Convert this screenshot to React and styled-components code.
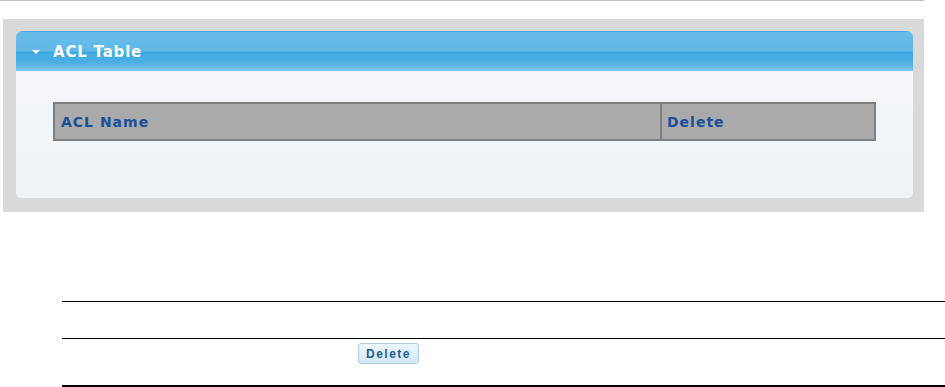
import React from 'react'
import styled, { createGlobalStyle } from 'styled-components'

const Global = createGlobalStyle`
  body {
    margin: 0;
    background: #fff;
    font-family: "Liberation Sans", Arial, sans-serif;
  }
`

const Page = styled.div`
  width: 945px;
  height: 387px;
  overflow: hidden;
`

const TopRule = styled.div`
  width: 924px;
  height: 1px;
  background: #bdbdbd;
`

const Frame = styled.div`
  margin: 18px 0 0 3px;
  width: 921px;
  height: 193px;
  box-sizing: border-box;
  padding: 12px 11px 14px 13px;
  background: #d9d9d9;
`

const Panel = styled.div`
  height: 100%;
  display: flex;
  flex-direction: column;
  border-radius: 6px 6px 5px 5px;
  overflow: hidden;
  background: linear-gradient(#f8f9fb, #eef3f7);
`

const PanelHead = styled.div`
  height: 40px;
  flex: none;
  box-sizing: border-box;
  display: flex;
  align-items: center;
  gap: 13px;
  padding-left: 16px;
  border-top: 1px solid #4ea8e6;
  background: linear-gradient(#66bbe8 0%, #62b9e8 48%, #3ea9e1 52%, #4bafe3 78%, #80c7ee 100%);
  color: #fff;
  font-family: "DejaVu Sans", Verdana, sans-serif;
  font-size: 15px;
  font-weight: bold;
  letter-spacing: 0.8px;
`

const Caret = styled.span`
  width: 0;
  height: 0;
  border-left: 4px solid transparent;
  border-right: 4px solid transparent;
  border-top: 4px solid #fff;
  margin-top: 1px;
`

const PanelBody = styled.div`
  padding: 31px 0 0 37px;
`

const HeadTable = styled.div`
  width: 823px;
  height: 39px;
  box-sizing: border-box;
  display: grid;
  grid-template-columns: 605px 1fr;
  border: 2px solid #7f7f7f;
  background: #aaaaaa;
`

const HeadCell = styled.div`
  display: flex;
  align-items: center;
  padding-left: ${p => p.pad}px;
  border-left: ${p => (p.divider ? '2px solid #7f7f7f' : 'none')};
  color: #1a4f99;
  font-family: "DejaVu Sans", Verdana, sans-serif;
  font-size: 14px;
  font-weight: bold;
  letter-spacing: 1px;
`

const List = styled.div`
  margin: 89px 0 0 62px;
  border-top: 1px solid #000;
`

const Row = styled.div`
  height: ${p => p.h}px;
  box-sizing: border-box;
  display: grid;
  grid-template-columns: 296px 1fr;
  align-items: start;
  padding-top: 4px;
  border-bottom: ${p => p.line}px solid #000;
`

const Button = styled.button`
  width: 61px;
  height: 21px;
  padding: 0;
  border: 1px solid #aacde8;
  border-radius: 3px;
  background: linear-gradient(#edf5fc, #d4e8f7);
  color: #1f5f8f;
  font-family: "Liberation Sans", Arial, sans-serif;
  font-size: 12px;
  font-weight: bold;
  letter-spacing: 1.5px;
  cursor: pointer;
`

export default function App() {
  return (
    <Page>
      <Global />
      <TopRule />
      <Frame>
        <Panel>
          <PanelHead>
            <Caret />
            ACL Table
          </PanelHead>
          <PanelBody>
            <HeadTable>
              <HeadCell pad={6}>ACL Name</HeadCell>
              <HeadCell pad={5} divider>Delete</HeadCell>
            </HeadTable>
          </PanelBody>
        </Panel>
      </Frame>
      <List>
        <Row h={37} line={1} />
        <Row h={48} line={2}>
          <span />
          <div>
            <Button>Delete</Button>
          </div>
        </Row>
      </List>
    </Page>
  )
}
